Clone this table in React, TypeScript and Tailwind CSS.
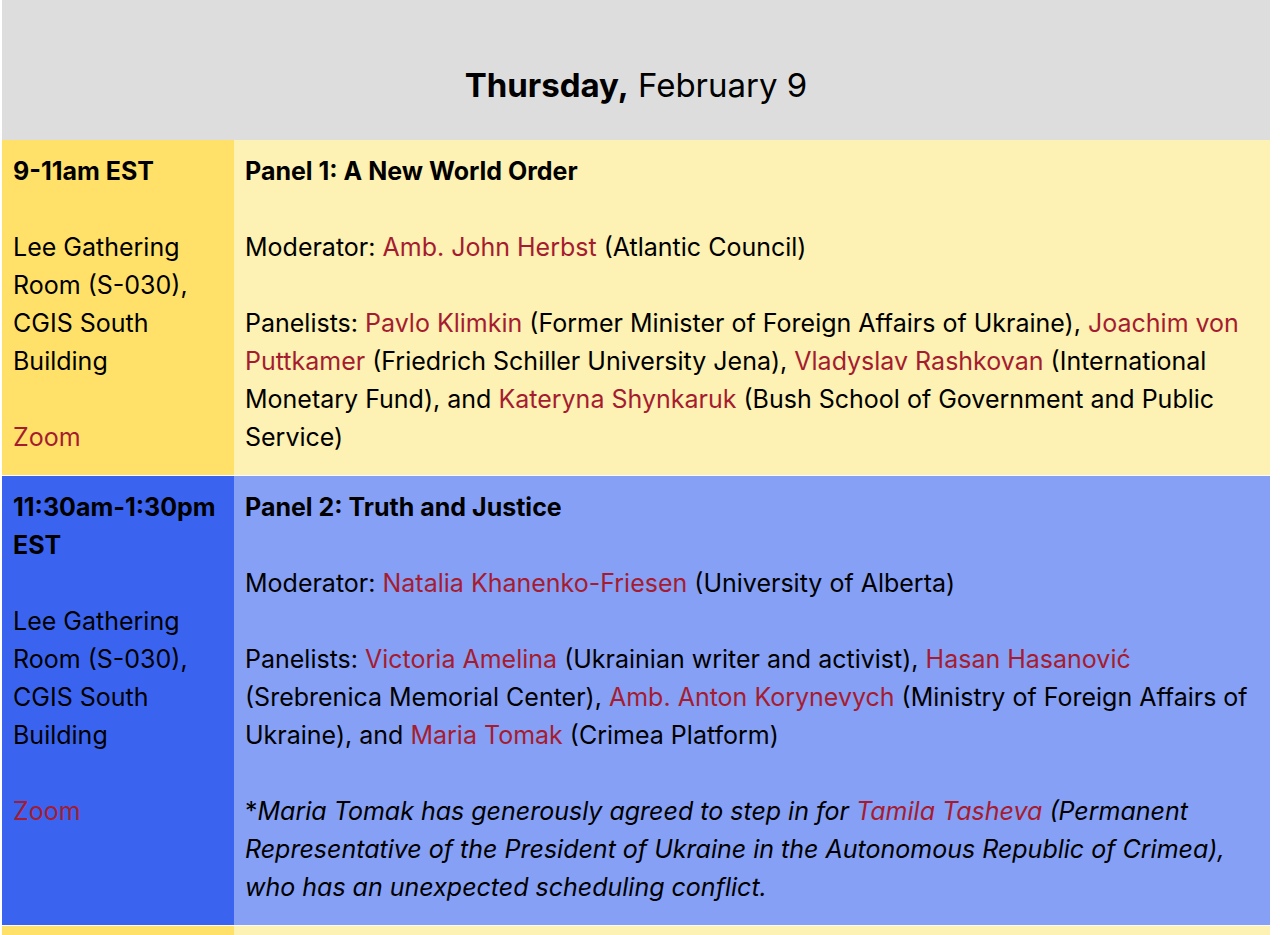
import React from 'react';

type Part = string | { link: string };

type Session = {
  time: string;
  place: string[];
  title: string;
  moderator: Part[];
  panelists: Part[];
  note?: Part[];
  left: string;
  right: string;
};

const sessions: Session[] = [
  {
    time: '9-11am EST',
    place: ['Lee Gathering Room (S-030), CGIS South Building'],
    title: 'Panel 1: A New World Order',
    moderator: [{ link: 'Amb. John Herbst' }, ' (Atlantic Council)'],
    panelists: [
      { link: 'Pavlo Klimkin' },
      ' (Former Minister of Foreign Affairs of Ukraine), ',
      { link: 'Joachim von Puttkamer' },
      ' (Friedrich Schiller University Jena), ',
      { link: 'Vladyslav Rashkovan' },
      ' (International Monetary Fund), and ',
      { link: 'Kateryna Shynkaruk' },
      ' (Bush School of Government and Public Service)',
    ],
    left: 'bg-[#ffe16a]',
    right: 'bg-[#fdf1b3]',
  },
  {
    time: '11:30am-1:30pm EST',
    place: ['Lee Gathering Room (S-030), CGIS South Building'],
    title: 'Panel 2: Truth and Justice',
    moderator: [{ link: 'Natalia Khanenko-Friesen' }, ' (University of Alberta)'],
    panelists: [
      { link: 'Victoria Amelina' },
      ' (Ukrainian writer and activist), ',
      { link: 'Hasan Hasanović' },
      ' (Srebrenica Memorial Center), ',
      { link: 'Amb. Anton Korynevych' },
      ' (Ministry of Foreign Affairs of Ukraine), and ',
      { link: 'Maria Tomak' },
      ' (Crimea Platform)',
    ],
    note: [
      'Maria Tomak has generously agreed to step in for ',
      { link: 'Tamila Tasheva' },
      ' (Permanent Representative of the President of Ukraine in the Autonomous Republic of Crimea), who has an unexpected scheduling conflict.',
    ],
    left: 'bg-[#3a64f0]',
    right: 'bg-[#86a0f5]',
  },
  {
    time: '2-4pm EST',
    place: ['Lee Gathering Room (S-030), CGIS South Building'],
    title: 'Panel 3: Rebuilding Ukraine',
    moderator: [],
    panelists: [],
    left: 'bg-[#ffe16a]',
    right: 'bg-[#fdf1b3]',
  },
];

const Rich = ({ parts }: { parts: Part[] }) => (
  <>
    {parts.map((p, i) =>
      typeof p === 'string' ? (
        <span key={i}>{p}</span>
      ) : (
        <a key={i} className="text-[#a51c30]">
          {p.link}
        </a>
      )
    )}
  </>
);

export default function App() {
  return (
    <div className="min-h-screen bg-white font-['Inter','Liberation_Sans',sans-serif] text-black">
      <div className="ml-[2px] w-[1268px]">
        <div className="h-[140px] bg-[#dddddd] pt-[64px] text-center text-[33px] leading-[42px]">
          <span className="font-bold">Thursday,</span> February 9
        </div>

        {sessions.map((s) => (
          <div key={s.title} className="flex border-b border-[#f2f2f0]/40 text-[25px] leading-[38px]">
            <div className={`w-[232px] shrink-0 px-[11px] pt-3 pb-[19px] ${s.left}`}>
              <p className="font-bold">{s.time}</p>
              {s.place.map((p) => (
                <p key={p} className="mt-[38px]">{p}</p>
              ))}
              <p className="mt-[38px] text-[#a51c30]">Zoom</p>
            </div>
            <div className={`flex-1 px-[11px] pt-3 pb-[19px] ${s.right}`}>
              <p className="font-bold">{s.title}</p>
              {s.moderator.length > 0 && (
                <p className="mt-[38px]">
                  Moderator: <Rich parts={s.moderator} />
                </p>
              )}
              {s.panelists.length > 0 && (
                <p className="mt-[38px]">
                  Panelists: <Rich parts={s.panelists} />
                </p>
              )}
              {s.note && (
                <p className="mt-[38px]">
                  *<em><Rich parts={s.note} /></em>
                </p>
              )}
            </div>
          </div>
        ))}
      </div>
    </div>
  );
}
